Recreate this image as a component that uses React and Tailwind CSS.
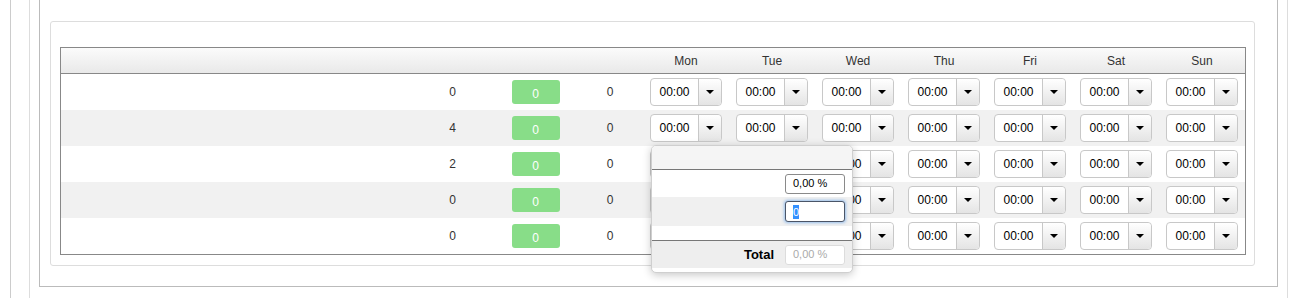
const ROWS = [
  { a: 0, b: 0, c: 0 },
  { a: 4, b: 0, c: 0 },
  { a: 2, b: 0, c: 0 },
  { a: 0, b: 0, c: 0 },
  { a: 0, b: 0, c: 0 },
]

const DAYS = ['Mon', 'Tue', 'Wed', 'Thu', 'Fri', 'Sat', 'Sun']

const GRID = 'grid grid-cols-[350px_83px_83px_66px_repeat(7,86px)]'

function TimePicker({ children }) {
  return (
    <div className="relative flex w-[72px] h-[28px] rounded-[4px] border border-[#c8c8c8] bg-white">
      <div className="w-[47px] flex items-center justify-center text-[12px] text-black">00:00</div>
      <div className="flex-1 flex items-center justify-center border-l border-[#c8c8c8] rounded-r-[4px] bg-gradient-to-b from-white to-[#e4e4e4]">
        <span className="w-0 h-0 border-x-[4px] border-t-[4px] border-x-transparent border-t-black" />
      </div>
      {children}
    </div>
  )
}

function Popup() {
  return (
    <div className="absolute left-0 top-[calc(100%+4px)] z-10 w-[202px] rounded-[5px] border border-[#cfcfcf] bg-white shadow-[0_2px_8px_rgba(0,0,0,0.22)] overflow-hidden">
      <div className="h-[24px] bg-[#f5f5f5] border-b border-[#777]" />
      <div className="h-[27px] flex items-center justify-end pr-[7px]">
        <div className="w-[60px] h-[20px] rounded-[3px] border border-[#8a8a8a] flex items-center px-[7px] text-[11px] text-black">
          0,00 %
        </div>
      </div>
      <div className="h-[29px] bg-[#f0f0f0] flex items-center justify-end pr-[7px]">
        <div className="w-[60px] h-[21px] rounded-[3px] border border-[#4a5568] bg-white shadow-[0_0_3px_1px_rgba(80,150,230,0.55)] flex items-center px-[7px] text-[11px]">
          <span className="bg-[#3390ff] text-white leading-[14px]">0</span>
        </div>
      </div>
      <div className="h-[15px] border-b border-[#777]" />
      <div className="h-[27px] bg-[#eeeeee] flex items-center justify-end gap-[11px] pr-[7px]">
        <span className="text-[13px] font-bold text-black">Total</span>
        <div className="w-[60px] h-[20px] rounded-[3px] border border-[#dcdcdc] bg-white flex items-center px-[7px] text-[11px] text-[#aaa]">
          0,00 %
        </div>
      </div>
      <div className="h-[4px]" />
    </div>
  )
}

export default function App() {
  return (
    <div className="h-[298px] w-full overflow-hidden bg-white font-['Liberation_Sans',Arial,sans-serif]">
      <div className="ml-[10px] h-full border-l border-[#cccccc] pl-[18px]">
        <div className="w-[1259px] h-full border-x border-[#dddddd] px-[9px]">
          <div className="border-x border-b border-[#bbbbbb] pt-[21px] pl-[10px] pr-[22px] pb-[20px]">
            <div className="rounded-[3px] border border-[#dddddd] pt-[25px] pl-[9px] pr-[8px] pb-[10px]">
              <div className="w-[1186px] border border-[#888888] bg-white">
                {/* Header */}
                <div className={`${GRID} h-[26px] border-b border-[#888888] bg-gradient-to-b from-[#fbfbfb] to-[#e9e9e9]`}>
                  <div />
                  <div />
                  <div />
                  <div />
                  {DAYS.map((d) => (
                    <div key={d} className="flex items-center justify-center text-[12px] text-[#333]">
                      {d}
                    </div>
                  ))}
                </div>

                {/* Rows */}
                {ROWS.map((row, i) => (
                  <div
                    key={i}
                    className={`${GRID} h-[36px] ${i % 2 === 1 ? 'bg-[#f1f1f1]' : 'bg-white'}`}
                  >
                    <div />
                    <div className="flex items-center justify-center text-[12px] text-[#333]">{row.a}</div>
                    <div className="flex items-center justify-center">
                      <div className="w-[48px] h-[24px] rounded-[3px] bg-[#88dd88] flex items-center justify-center pt-[4px] text-[12px] text-white">
                        {row.b}
                      </div>
                    </div>
                    <div className="flex items-center justify-center text-[12px] text-[#333]">{row.c}</div>
                    {DAYS.map((d, j) => (
                      <div key={d} className="flex items-center justify-center">
                        <TimePicker>{i === 1 && j === 0 && <Popup />}</TimePicker>
                      </div>
                    ))}
                  </div>
                ))}
              </div>
            </div>
          </div>
        </div>
      </div>
    </div>
  )
}
